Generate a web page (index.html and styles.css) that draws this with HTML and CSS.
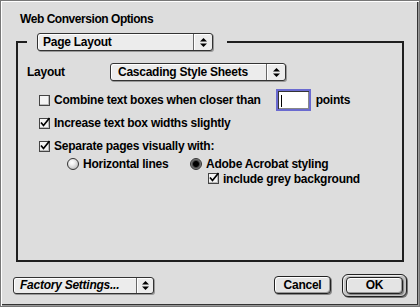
FILE: index.html
```html
<!DOCTYPE html>
<html lang="en">
<head>
  <meta charset="UTF-8">
  <title>Web Conversion Options</title>
  <link rel="stylesheet" href="styles.css">
</head>
<body>
  <div class="window">
    <div class="title">Web Conversion Options</div>

    <fieldset class="group">
      <legend>
        <span class="popup popup-page">
          <span class="popup-label">Page Layout</span>
          <span class="popup-arrows"><svg width="7" height="9" viewBox="0 0 7 9"><polygon points="3.5,0 7,3.5 0,3.5" /><polygon points="0,5.5 7,5.5 3.5,9" /></svg></span>
        </span>
      </legend>

      <div class="layout-row">
        <span class="label">Layout</span>
        <span class="popup popup-css">
          <span class="popup-label">Cascading Style Sheets</span>
          <span class="popup-arrows"><svg width="7" height="9" viewBox="0 0 7 9"><polygon points="3.5,0 7,3.5 0,3.5" /><polygon points="0,5.5 7,5.5 3.5,9" /></svg></span>
        </span>
      </div>

      <div class="option option-combine">
        <span class="check"></span>
        <span class="text">Combine text boxes when closer than</span>
        <span class="field"><span class="caret"></span></span>
        <span class="text">points</span>
      </div>

      <div class="option option-widths">
        <span class="check checked"><svg width="11" height="11" viewBox="0 0 11 11"><path d="M2 5.5 L4.5 8.5 L10.5 1" /></svg></span>
        <span class="text">Increase text box widths slightly</span>
      </div>

      <div class="option option-separate">
        <span class="check checked"><svg width="11" height="11" viewBox="0 0 11 11"><path d="M2 5.5 L4.5 8.5 L10.5 1" /></svg></span>
        <span class="text">Separate pages visually with:</span>
      </div>

      <div class="radios">
        <div class="radio-item radio-lines">
          <span class="radio"></span>
          <span class="text">Horizontal lines</span>
        </div>
        <div class="radio-item">
          <span class="radio selected"></span>
          <span class="text">Adobe Acrobat styling</span>
        </div>
      </div>

      <div class="option option-grey">
        <span class="check checked"><svg width="11" height="11" viewBox="0 0 11 11"><path d="M2 5.5 L4.5 8.5 L10.5 1" /></svg></span>
        <span class="text">include grey background</span>
      </div>
    </fieldset>

    <div class="footer">
      <span class="popup popup-factory">
        <span class="popup-label">Factory Settings...</span>
        <span class="popup-arrows"><svg width="7" height="9" viewBox="0 0 7 9"><polygon points="3.5,0 7,3.5 0,3.5" /><polygon points="0,5.5 7,5.5 3.5,9" /></svg></span>
      </span>
      <span class="spacer"></span>
      <span class="button button-cancel">Cancel</span>
      <span class="default-ring"><span class="button button-ok">OK</span></span>
    </div>
  </div>
</body>
</html>
```

FILE: styles.css
```css
*{
  margin: 0;
  padding: 0;
  box-sizing: border-box;
}
body{
  background: #dddddd;
  font-family: "Liberation Sans", Arial, sans-serif;
  font-size: 12px;
  font-weight: bold;
  letter-spacing: -0.25px;
  color: #000;
}
.window{
  width: 420px;
  height: 307px;
  border: 1px solid #777;
  box-shadow: inset 1px 1px 0 #fff, inset -1px -1px 0 #999, inset -2px -2px 0 #333;
  background: #dddddd;
  display: flex;
  flex-direction: column;
}
.title{
  height: 16px;
  line-height: 16px;
  margin-top: 10px;
  padding-left: 19px;
  letter-spacing: -0.45px;
}

/* group box */
.group{
  margin: 6px 15px 0 15px;
  height: 229px;
  border: 2px solid #1e1e1e;
  padding: 12px 9px 0 9px;
}
.group legend{
  margin-left: 0;
  padding: 0 14px 0 10px;
  height: 18px;
}

/* popup menus */
.popup{
  display: flex;
  align-items: stretch;
  height: 18px;
  border: 1px solid #333;
  border-radius: 3px;
  background: #ececec;
  box-shadow: inset 1px 1px 0 #fff, 1px 1px 0 #999;
}
.popup-label{
  flex: 1;
  padding-left: 5px;
  line-height: 16px;
  white-space: nowrap;
}
.popup-arrows{
  width: 19px;
  border-left: 1px solid #666;
  box-shadow: inset 1px 0 0 #fff;
  display: flex;
  align-items: center;
  justify-content: center;
}
.popup-page{
  width: 176px;
}

.layout-row{
  display: flex;
  align-items: center;
  height: 18px;
}
.label{
  width: 83px;
}
.popup-css{
  width: 176px;
}
.popup-css .popup-label{
  padding-left: 7px;
}

/* check boxes */
.option{
  display: flex;
  align-items: center;
  height: 16px;
  padding-left: 12px;
}
.option-combine{
  height: 22px;
  margin-top: 8px;
}
.option-widths{
  margin-top: 4px;
}
.option-separate{
  margin-top: 7px;
}
.option-grey{
  height: 15px;
  padding-left: 181px;
}
.check{
  width: 11px;
  height: 11px;
  border: 1px solid #444;
  background: #f4f4f4;
  box-shadow: inset -1px -1px 0 #bbb;
  margin-right: 4px;
  position: relative;
}
.check svg{
  position: absolute;
  left: -1px;
  top: -2px;
}
.check path{
  fill: none;
  stroke: #000;
  stroke-width: 1.7;
}
.text{
  white-space: nowrap;
}

/* text field */
.field{
  width: 35px;
  height: 22px;
  margin: 0 5px 0 15px;
  border: 2px solid #6a6ad0;
  background: #fff;
  box-shadow: inset 1px 1px 0 #333, inset -1px -1px 0 #888;
  padding: 4px 0 0 3px;
}
.caret{
  display: block;
  width: 1px;
  height: 12px;
  background: #000;
}

/* radio buttons */
.radios{
  display: flex;
  align-items: center;
  height: 15px;
  margin-top: 2px;
  padding-left: 40px;
}
.radio-item{
  display: flex;
  align-items: center;
}
.radio-lines{
  width: 123px;
}
.radio{
  width: 12px;
  height: 12px;
  border-radius: 50%;
  border: 1px solid #333;
  background: radial-gradient(circle at 40% 35%, #fff 0, #eee 30%, #aaa 100%);
  margin-right: 4px;
}
.radio.selected{
  background: radial-gradient(circle at 50% 50%, #000 0, #000 2.5px, #444 3.5px, #888 5px);
}

/* footer buttons */
.footer{
  display: flex;
  align-items: center;
  height: 24px;
  margin-top: 11px;
  padding: 0 12px 0 12px;
}
.popup-factory{
  width: 141px;
  height: 17px;
}
.popup-factory .popup-label{
  font-style: italic;
  line-height: 15px;
  padding-left: 6px;
}
.popup-factory .popup-arrows{
  width: 17px;
}
.spacer{
  flex: 1;
}
.button{
  display: flex;
  align-items: center;
  justify-content: center;
  height: 18px;
  border: 1px solid #222;
  border-radius: 4px;
  background: #e4e4e4;
  box-shadow: inset 1px 1px 0 #fff, inset -1px -1px 0 #999, 1px 1px 0 #888;
}
.button-cancel{
  width: 57px;
  margin-right: 11px;
}
.default-ring{
  display: flex;
  width: 65px;
  height: 23px;
  padding: 2px 3px 2px 3px;
  border: 1px solid #222;
  border-radius: 6px;
  background: #c4c4c4;
  box-shadow: inset 1px 1px 0 #eee, 1px 1px 0 #777;
}
.button-ok{
  flex: 1;
  height: 17px;
}
```
